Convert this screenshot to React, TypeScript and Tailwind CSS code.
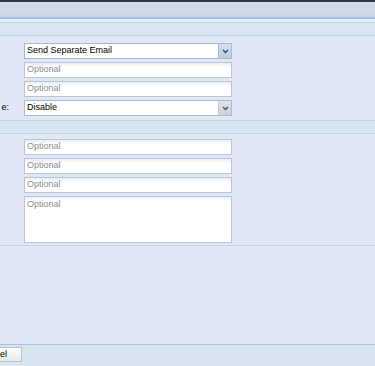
import type { ReactNode } from 'react'

const font = { fontFamily: '"Liberation Sans", Arial, sans-serif' }

function Chevron() {
  return (
    <svg width="7" height="5" viewBox="0 0 7 5">
      <path d="M1 1 L3.5 3.5 L6 1" fill="none" stroke="currentColor" strokeWidth="1.4" />
    </svg>
  )
}

function SelectBox({ value, tone }: { value: string; tone: 'blue' | 'gray' }) {
  return (
    <div className="flex h-[16px] w-[208px] border border-[#a9b9cc] bg-white">
      <div className="flex flex-1 items-center pl-[2px] text-[9px] text-black">{value}</div>
      <div
        className={`flex w-[13px] items-center justify-center border-l ${
          tone === 'blue'
            ? 'border-[#a9b9cc] bg-gradient-to-b from-[#d3dfee] to-[#bccde3] text-[#2d4a7a]'
            : 'border-[#c2c7cd] bg-gradient-to-b from-[#e2e4e7] to-[#cdd1d6] text-[#4a5563]'
        }`}
      >
        <Chevron />
      </div>
    </div>
  )
}

function TextBox({ tall }: { tall?: boolean }) {
  return (
    <div
      className={`w-[208px] border border-[#b9c5d3] bg-[linear-gradient(#eaeef3,#ffffff_4px)] px-[2px] text-[9px] text-[#8c8c8c] ${
        tall ? 'h-[47px] pt-[1px]' : 'flex h-[16px] items-center'
      }`}
    >
      Optional
    </div>
  )
}

function Row({ label, children }: { label?: string; children: ReactNode }) {
  return (
    <div className="flex items-center">
      <div className="flex w-[9px] shrink-0 justify-end whitespace-nowrap text-[9px] text-black">{label}</div>
      <div className="ml-[15px]">{children}</div>
    </div>
  )
}

function SectionBand() {
  return <div className="h-[14px] border-y border-[#c6d2e0] bg-[#dbe5f2]" />
}

export default function App() {
  return (
    <div className="h-[366px] w-[375px] overflow-hidden bg-[#dfe8f4]" style={font}>
      <div className="h-[2px] bg-[#2c3544]" />
      <div className="h-[15px] bg-gradient-to-b from-[#d3deeb] to-[#c9d6e6]" />
      <div className="h-[2px] bg-[#a6bfe0]" />
      <div className="h-[3px] bg-[#e4ecf6]" />
      <SectionBand />

      <div className="flex flex-col gap-[3px] pt-[7px]">
        <Row>
          <SelectBox value="Send Separate Email" tone="blue" />
        </Row>
        <Row>
          <TextBox />
        </Row>
        <Row>
          <TextBox />
        </Row>
        <Row label="e:">
          <SelectBox value="Disable" tone="gray" />
        </Row>
      </div>

      <div className="mt-[4px]">
        <SectionBand />
      </div>

      <div className="flex flex-col gap-[3px] pt-[5px]">
        <Row>
          <TextBox />
        </Row>
        <Row>
          <TextBox />
        </Row>
        <Row>
          <TextBox />
        </Row>
        <Row>
          <TextBox tall />
        </Row>
      </div>

      <div className="mt-[2px] h-[1px] bg-[#c6d2e0]" />

      <div className="h-[98px]" />

      <div className="h-[1px] bg-[#a9c2e2]" />
      <div className="h-[21px] bg-[#d9e4f1] pt-[2px]">
        <button
          type="button"
          className="flex h-[15px] w-[22px] items-center border border-l-0 border-[#bcc3cb] bg-gradient-to-b from-white to-[#e6e8eb] text-[9px] text-black"
        >
          el
        </button>
      </div>
    </div>
  )
}
